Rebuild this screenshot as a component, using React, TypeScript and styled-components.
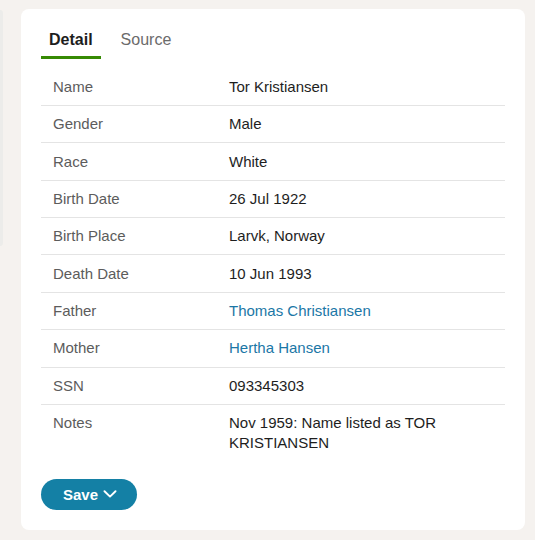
import React, { useState } from "react";
import styled, { createGlobalStyle } from "styled-components";

interface Fact {
  label: string;
  value: string;
  link?: boolean;
}

const facts: Fact[] = [
  { label: "Name", value: "Tor Kristiansen" },
  { label: "Gender", value: "Male" },
  { label: "Race", value: "White" },
  { label: "Birth Date", value: "26 Jul 1922" },
  { label: "Birth Place", value: "Larvk, Norway" },
  { label: "Death Date", value: "10 Jun 1993" },
  { label: "Father", value: "Thomas Christiansen", link: true },
  { label: "Mother", value: "Hertha Hansen", link: true },
  { label: "SSN", value: "093345303" },
  { label: "Notes", value: "Nov 1959: Name listed as TOR KRISTIANSEN" },
];

const GlobalStyle = createGlobalStyle`
  body {
    margin: 0;
    background: #f5f2ef;
    font-family: "Liberation Sans", Arial, sans-serif;
  }
`;

const App = () => {
  const [tab, setTab] = useState<"detail" | "source">("detail");

  return (
    <>
      <GlobalStyle />
      <Page>
        <SidePanel />
        <Card>
          <Tabs>
            <Tab $active={tab === "detail"} onClick={() => setTab("detail")}>
              Detail
            </Tab>
            <Tab $active={tab === "source"} onClick={() => setTab("source")}>
              Source
            </Tab>
          </Tabs>
          <FactTable>
            {facts.map((f) => (
              <FactRow key={f.label}>
                <Label>{f.label}</Label>
                {f.link ? (
                  <Value>
                    <PersonLink href="#">{f.value}</PersonLink>
                  </Value>
                ) : (
                  <Value>{f.value}</Value>
                )}
              </FactRow>
            ))}
          </FactTable>
          <SaveBtn>
            Save
            <svg width="14" height="8" viewBox="0 0 14 8" fill="none">
              <path
                d="M1.5 1.2 7 6.6l5.5-5.4"
                stroke="currentColor"
                strokeWidth="1.9"
                strokeLinecap="round"
                strokeLinejoin="round"
              />
            </svg>
          </SaveBtn>
        </Card>
      </Page>
    </>
  );
};

const Page = styled.div`
  display: flex;
  align-items: flex-start;
  gap: 18px;
  padding: 9px 10px 10px 0;
`;

// edge of the record list that sits behind the detail card
const SidePanel = styled.div`
  width: 3px;
  height: 236px;
  margin-top: 1px;
  background: #ececea;
  border-radius: 0 4px 4px 0;
`;

const Card = styled.div`
  flex: 1;
  background: #fff;
  border-radius: 8px;
  padding: 20px;
`;

const Tabs = styled.div`
  display: flex;
  gap: 12px;
`;

const Tab = styled.button<{ $active: boolean }>`
  border: 0;
  background: none;
  font-family: inherit;
  font-size: 16px;
  line-height: 20px;
  padding: 1px 8px 6px;
  margin: 0;
  cursor: pointer;
  font-weight: ${(p) => (p.$active ? 700 : 400)};
  color: ${(p) => (p.$active ? "#1d1d1d" : "#6b6b6b")};
  border-bottom: 3px solid ${(p) => (p.$active ? "#368a04" : "transparent")};
`;

const FactTable = styled.div`
  margin-top: 9.6px;
  display: flex;
  flex-direction: column;
`;

const FactRow = styled.div`
  display: grid;
  grid-template-columns: 188px 1fr;
  border-bottom: 1px solid #e4e4e4;
  &:last-child {
    border-bottom: 0;
  }
`;

const Label = styled.div`
  padding: 8.2px 12px;
  font-size: 15px;
  line-height: 20px;
  color: #5c5c5c;
`;

const Value = styled.div`
  padding: 8.2px 20px 8.2px 0;
  font-size: 15px;
  line-height: 19.6px;
  color: #1e1e1e;
`;

const PersonLink = styled.a`
  color: #1b77a6;
  text-decoration: none;
`;

const SaveBtn = styled.button`
  margin-top: 18px;
  display: inline-flex;
  align-items: center;
  gap: 5px;
  height: 31px;
  padding: 0 20px 0 22px;
  border: 0;
  border-radius: 16px;
  background: #1480a5;
  color: #fff;
  font-family: inherit;
  font-size: 15px;
  font-weight: 700;
  cursor: pointer;
`;

export default App;
